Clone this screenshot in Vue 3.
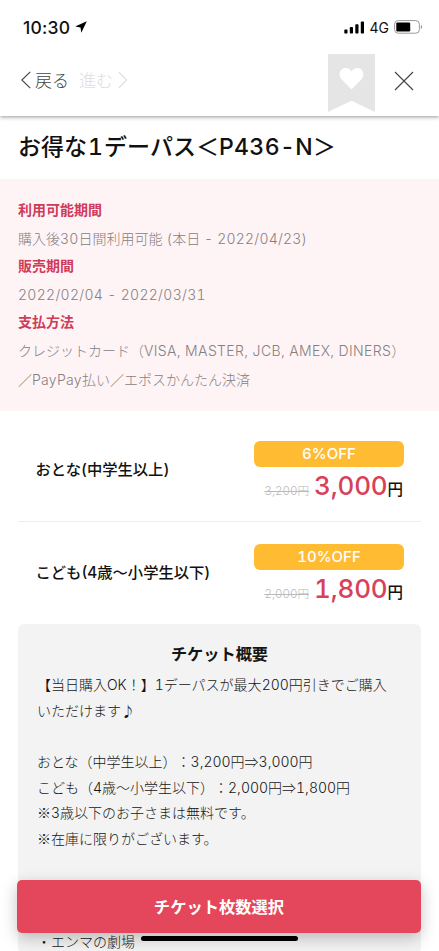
<script setup>
// Splits a line into Latin and Japanese runs, which take different tracking.
const runs = (text) =>
  text.split(/([\x20-\x7e]+)/).filter(Boolean).map((t) => ({ t, latin: /^[\x20-\x7e]/.test(t) }))

const periods = [
  { title: '利用可能期間', lines: [{ text: '購入後30日間利用可能 (本日 - 2022/04/23)', cls: 'usage' }] },
  { title: '販売期間', lines: [{ text: '2022/02/04 - 2022/03/31', cls: 'dates' }] },
  {
    title: '支払方法',
    lines: [
      { text: 'クレジットカード（VISA, MASTER, JCB, AMEX, DINERS）', cls: 'cards' },
      { text: '／PayPay払い／エポスかんたん決済', cls: 'paypay' },
    ],
  },
]
const fares = [
  { name: 'おとな(中学生以上)', off: '6%OFF', before: '3,200', price: '3,000' },
  { name: 'こども(4歳〜小学生以下)', off: '10%OFF', before: '2,000', price: '1,800' },
]
const overview = [
  '【当日購入OK！】1デーパスが最大200円引きでご購入',
  'いただけます♪',
  '',
  'おとな（中学生以上）：3,200円⇒3,000円',
  'こども（4歳〜小学生以下）：2,000円⇒1,800円',
  '※3歳以下のお子さまは無料です。',
  '※在庫に限りがございます。',
  '',
  '',
  '',
  '・エンマの劇場',
]
</script>

<template>
  <div class="screen" lang="ja">
    <header class="top">
      <div class="status">
        <span class="time">10:30</span>
        <svg class="arrow" width="12" height="12" viewBox="0 0 12 12"><path d="M11.8.2.2 5.500l5.300 1 .8 5.300z" /></svg>
        <span class="grow"></span>
        <svg class="signal" width="21" height="13" viewBox="0 0 21 13">
          <rect x="0.3" y="8.4" width="3.2" height="4" rx=".7" />
          <rect x="5.8" y="6" width="3.2" height="6.4" rx=".7" />
          <rect x="11.3" y="3.3" width="3.2" height="9.1" rx=".7" />
          <rect x="16.8" y=".4" width="3.2" height="12" rx=".7" />
        </svg>
        <span class="net">4G</span>
        <svg class="battery" width="29" height="14" viewBox="0 0 29 14">
          <rect x=".6" y=".6" width="24.8" height="12.6" rx="3.6" fill="none" stroke="#999" />
          <rect x="2.3" y="2.4" width="13.9" height="9" rx="1.2" />
          <path d="M26.9 4.8c1.7.7 1.7 3.7 0 4.4z" fill="#999" />
        </svg>
      </div>
      <nav class="nav">
        <span class="back"><svg width="10" height="18" viewBox="0 0 10 18"><path d="M9.300.8.8 9l8.500 8.200" /></svg>戻る</span>
        <span class="next">進む<svg width="10" height="18" viewBox="0 0 10 18"><path d="M.7.8 8.600 9 .7 17.200" /></svg></span>
        <span class="grow"></span>
        <svg class="ribbon" width="47" height="58" viewBox="0 0 47 58">
          <path d="M0 0h47v58L23.500 46.800 0 58z" fill="#e5e5e5" />
          <path d="M23.500 35.500 13.500 25.200C9.500 20.600 12.300 14 17.500 14c3 0 4.900 1.600 6 3.600 1.100-2 3-3.600 6-3.600 5.200 0 8 6.600 4 11.200z" fill="#fff" />
        </svg>
        <svg class="close" width="20" height="20" viewBox="0 0 20 20"><path d="m1 1 18 18M19 1 1 19" /></svg>
      </nav>
    </header>

    <h1>お得な<span class="latin one">1</span>デーパス＜<span class="latin">P436-N</span>＞</h1>

    <section class="info">
      <template v-for="p in periods" :key="p.title">
        <h2>{{ p.title }}</h2>
        <p v-for="l in p.lines" :key="l.text" :class="l.cls">
          <span v-for="(r, i) in runs(l.text)" :key="i" :class="{ latin: r.latin }">{{ r.t }}</span>
        </p>
      </template>
    </section>

    <section class="fares">
      <div v-for="f in fares" :key="f.name" class="fare">
        <span class="name">{{ f.name }}</span>
        <div class="cost">
          <div class="off">{{ f.off }}</div>
          <div class="prices">
            <s>{{ f.before }}円</s><b>{{ f.price }}</b><span class="yen">円</span>
          </div>
        </div>
      </div>
    </section>

    <section class="overview">
      <h3>チケット概要</h3>
      <p v-for="(l, i) in overview" :key="i">
        <span v-for="(r, j) in runs(l)" :key="j" :class="{ latin: r.latin }">{{ r.t }}</span>
      </p>
    </section>

    <button class="select">チケット枚数選択</button>
    <div class="home"></div>
  </div>
</template>

<style>
body { margin: 0; background: #fff; }
</style>
<style scoped>
* { box-sizing: border-box; }
.screen {
  position: relative;
  width: 439px;
  height: 951px;
  overflow: hidden;
  background: #fff;
  color: #111;
  font-family: "Noto Sans CJK JP", sans-serif;
  text-spacing-trim: space-all;
}
h1, h2, h3, p { margin: 0; white-space: nowrap; }
svg { display: block; flex: none; }
.latin, s, b, .off, .name { font-family: Inter, "Noto Sans CJK JP", sans-serif; font-variant-numeric: tabular-nums; }
.grow { flex: 1; }
.top { position: relative; height: 116px; background: #fff; box-shadow: 0 1px 4px rgba(0, 0, 0, .42); }
.status { display: flex; align-items: center; height: 54px; padding: 0 16px 0 23px; font-family: Inter, sans-serif; }
.time { font-size: 17.500px; font-weight: 500; letter-spacing: .2px; }
.arrow { margin-left: 5px; }
.net { margin: 0 5px 0 5px; font-size: 14px; }
.nav { display: flex; height: 62px; padding: 0 25px 0 21px; font-size: 17px; font-weight: 300; }
.back, .next { display: flex; align-items: center; height: 52px; line-height: 24px; }
.back { color: #444; }
.back svg { margin-right: 4px; }
.next { margin-left: 10px; color: #ddd; }
.next svg { margin-left: 5px; }
.nav path { stroke-width: 1.1; }
.back path, .next path, .close path { fill: none; stroke: currentColor; }
.close { align-self: flex-start; margin: 17px 0 0 19px; color: #444; }
h1 { height: 63px; padding-left: 18px; font-size: 23px; line-height: 59px; font-weight: 500; }
h1 .latin { letter-spacing: .4px; }
h1 .one { margin: 0 .800px 0 1px; }
.info { height: 232px; padding: 17px 18px 0; background: #fff4f5; color: #858083; font-size: 14px; line-height: 28.100px; font-weight: 300; }
.info h2 { height: 28.100px; color: #cf3b5a; font-size: 14px; line-height: 27px; font-weight: 700; }
.info p { height: 28.100px; }
.usage .latin { letter-spacing: .2px; }
.dates .latin { letter-spacing: .3px; }
.cards .latin { letter-spacing: .370px; }
.paypay .latin { letter-spacing: .3px; }
.fares { margin: 0 18px; }
.fare { display: flex; justify-content: space-between; height: 103px; padding: 30px 17px 0 17.500px; }
.fare:first-child { height: 111px; border-bottom: 1px solid #eee; }
.fare:last-child { padding-top: 22px; }
.name { padding-top: 17px; font-size: 15.300px; line-height: 24px; font-weight: 500; }
.cost { width: 150px; }
.off { height: 26px; border-radius: 6px; background: #ffbc33; color: #fff; text-align: center; font-size: 15px; line-height: 25px; font-weight: 500; }
.prices { display: flex; justify-content: flex-end; align-items: baseline; height: 38px; line-height: 38px; }
s { margin-right: 5px; color: #bbb; font-size: 11.600px; font-weight: 300; }
b { color: #d9415b; font-size: 26px; font-weight: 500; letter-spacing: -.2px; }
.yen { font-size: 15.500px; font-weight: 500; margin-right: 1px; }
.overview { height: 330px; margin: -1px 18px 0; padding: 17px 19px 0; border-radius: 6px; background: #f3f3f3; color: #151515; font-size: 14px; line-height: 25.700px; font-weight: 300; }
.overview h3 { height: 31px; text-align: center; font-size: 16.200px; line-height: 25px; font-weight: 700; }
.overview p { height: 25.700px; }
.overview .latin { letter-spacing: 0; }
.select { position: absolute; left: 17px; top: 880px; width: 404px; height: 53px; padding: 0; border: 0; border-radius: 5px; background: #e4475c; color: #fff; font: 700 16.300px/51px "Noto Sans CJK JP", sans-serif; box-shadow: 0 5px 16px rgba(0, 0, 0, .24); }
.home { position: absolute; left: 141px; top: 936px; width: 157px; height: 5px; border-radius: 3px; background: #000; }
</style>
